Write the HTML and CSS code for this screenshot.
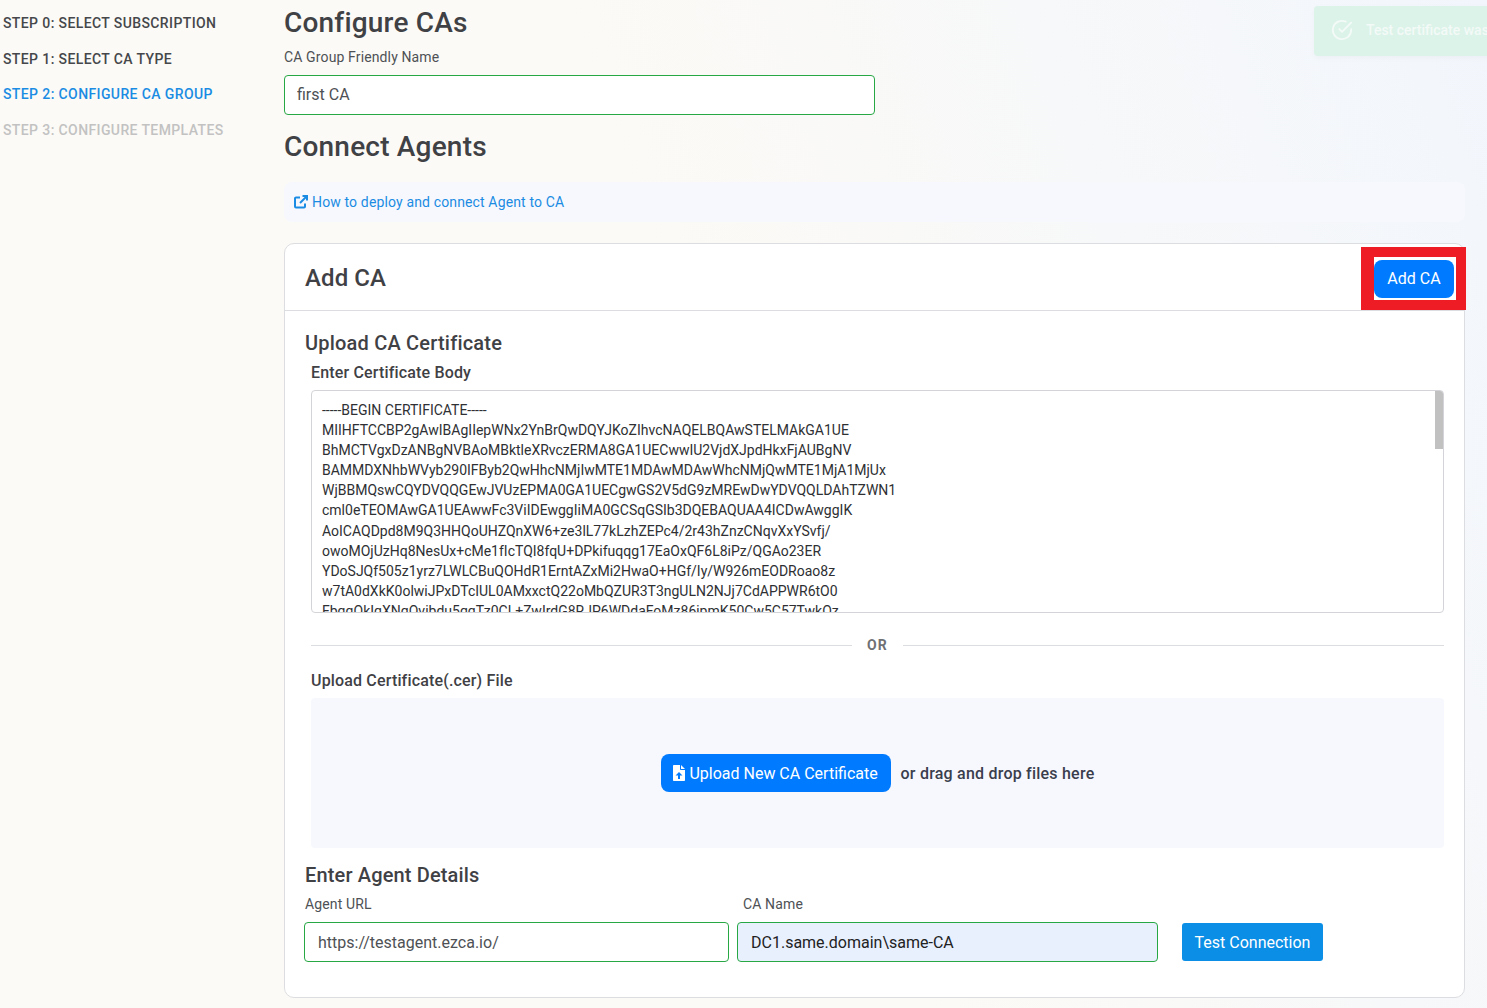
FILE: index.html
```html
<!DOCTYPE html>
<html>
<head>
    <title>Configure CAs</title>
    <link rel="stylesheet" href="styles.css">
</head>
<body>
    <div class="toast">
        <svg class="toast-icon" viewBox="0 0 24 24"><path d="M22 11.1V12a10 10 0 1 1-5.9-9.1"/><path d="M22 4 12 14l-3-3"/></svg>
        <span>Test certificate was created</span>
    </div>

    <div class="page">
        <div class="sidebar">
            <div class="step">Step 0: Select Subscription</div>
            <div class="step">Step 1: Select CA Type</div>
            <div class="step active">Step 2: Configure CA Group</div>
            <div class="step todo">Step 3: Configure Templates</div>
        </div>

        <div class="main">
            <h1>Configure CAs</h1>
            <label class="field-label">CA Group Friendly Name</label>
            <input type="text" class="text-input group-name" value="first CA">

            <h1 class="second-title">Connect Agents</h1>
            <div class="help-box">
                <a class="help-link">
                    <svg class="link-icon" viewBox="0 0 14 14"><path d="M11 8.500v3a1 1 0 0 1-1 1H2a1 1 0 0 1-1-1V3.500a1 1 0 0 1 1-1h4"/><path d="M8.500 1H13v4.500"/><path d="M13 1 6 8"/></svg>How to deploy and connect Agent to CA
                </a>
            </div>

            <div class="card">
                <div class="card-header">
                    <h2>Add CA</h2>
                    <div class="highlight">
                        <button class="btn-primary add-btn">Add CA</button>
                    </div>
                </div>

                <div class="card-body">
                    <h3>Upload CA Certificate</h3>
                    <div class="inset">
                        <div class="bold-label cert-label">Enter Certificate Body</div>
                        <div class="cert-wrap">
                            <textarea class="cert-body" readonly wrap="off">-----BEGIN CERTIFICATE-----
MIIHFTCCBP2gAwIBAgIIepWNx2YnBrQwDQYJKoZIhvcNAQELBQAwSTELMAkGA1UE
BhMCTVgxDzANBgNVBAoMBktleXRvczERMA8GA1UECwwIU2VjdXJpdHkxFjAUBgNV
BAMMDXNhbWVyb290IFByb2QwHhcNMjIwMTE1MDAwMDAwWhcNMjQwMTE1MjA1MjUx
WjBBMQswCQYDVQQGEwJVUzEPMA0GA1UECgwGS2V5dG9zMREwDwYDVQQLDAhTZWN1
cml0eTEOMAwGA1UEAwwFc3ViIDEwggIiMA0GCSqGSIb3DQEBAQUAA4ICDwAwggIK
AoICAQDpd8M9Q3HHQoUHZQnXW6+ze3lL77kLzhZEPc4/2r43hZnzCNqvXxYSvfj/
owoMOjUzHq8NesUx+cMe1fIcTQI8fqU+DPkifuqqg17EaOxQF6L8iPz/QGAo23ER
YDoSJQf505z1yrz7LWLCBuQOHdR1ErntAZxMi2HwaO+HGf/Iy/W926mEODRoao8z
w7tA0dXkK0olwiJPxDTcIUL0AMxxctQ22oMbQZUR3T3ngULN2NJj7CdAPPWR6tO0
FbqqOkIqXNqOvibdu5qqTz0CL+ZwIrdG8RJP6WDdaFoMz86jpmK50Cw5C57TwkOz</textarea>
                            <div class="scroll-thumb"></div>
                        </div>

                        <div class="divider"><span>OR</span></div>

                        <div class="bold-label">Upload Certificate(.cer) File</div>
                        <div class="dropzone">
                            <button class="btn-primary upload-btn">
                                <svg class="upload-icon" viewBox="0 0 12 16"><path d="M7 0v4.250c0 .4.350.750.750.750H12v10.250c0 .4-.350.750-.750.750H.750A.750.750 0 0 1 0 15.250V.750C0 .350.350 0 .750 0H7zm1 0 4 4H8V0zM6 7 2.500 10.500H5V14h2v-3.500h2.500L6 7z" fill-rule="evenodd"/></svg>Upload New CA Certificate
                            </button>
                            <span class="drop-text">or drag and drop files here</span>
                        </div>
                    </div>

                    <h3 class="agent-title">Enter Agent Details</h3>
                    <div class="agent-row">
                        <div class="agent-url">
                            <label class="field-label">Agent URL</label>
                            <input type="text" class="text-input url-input" value="https://testagent.ezca.io/">
                        </div>
                        <div class="agent-name">
                            <label class="field-label">CA Name</label>
                            <input type="text" class="text-input name-input" value="DC1.same.domain\same-CA">
                        </div>
                        <button class="test-btn">Test Connection</button>
                    </div>
                </div>
            </div>
        </div>
    </div>
</body>
</html>
```

FILE: styles.css
```css
html, body { height: 100%; }
body {
    margin: 0;
    overflow: hidden;
    font-family: Roboto, "Liberation Sans", sans-serif;
    color: #3f4145;
    background: linear-gradient(70deg, #fbfaf6 0%, #fcfaf6 50%, #f2f6fc 100%);
}
.page { display: flex; }

/* steps on the left */
.sidebar { width: 281px; padding: 6px 0 0 3px; flex-shrink: 0; }
.step {
    height: 35.700px;
    line-height: 35.700px;
    font-size: 14px;
    font-weight: 500;
    letter-spacing: 0.39px;
    text-transform: uppercase;
    color: #45474b;
}
.step.active { color: #1b8ce3; }
.step.todo { color: #c2c2c2; }

.main { width: 1181px; }
h1 {
    margin: 0;
    font-size: 28px;
    font-weight: 500;
    line-height: 34px;
    letter-spacing: 0.2px;
    padding-top: 6px;
}
.second-title { margin-top: 9px; }
.field-label { display: block; font-size: 14px; line-height: 18px; letter-spacing: 0.13px; color: #4e5155; }
.main > .field-label { margin-top: 8px; margin-bottom: 9px; }
.text-input {
    display: block;
    box-sizing: border-box;
    height: 40px;
    padding: 0 13px;
    font-family: inherit;
    font-size: 16px;
    color: #4e5155;
    background: #fff;
    border: 1px solid #28a745;
    border-radius: 4px;
    outline: none;
}
.group-name { width: 591px; padding: 0 12px 2px; }

.help-box {
    margin-top: 18px;
    height: 40px;
    display: flex;
    align-items: center;
    padding-left: 10px;
    background: #f7f8fd;
    border-radius: 8px;
}
.help-link { font-size: 14px; letter-spacing: 0.14px; color: #1b8ce3; display: flex; align-items: center; }
.link-icon { width: 14px; height: 14px; margin-right: 4px; fill: none; stroke: #1b8ce3; stroke-width: 2; }

.card {
    margin-top: 21px;
    box-sizing: border-box;
    background: #fff;
    border: 1px solid #dcdde0;
    border-radius: 10px;
    height: 755px;
}
.card-header {
    position: relative;
    height: 66px;
    display: flex;
    align-items: center;
    padding: 2px 0 0 20px;
    box-sizing: border-box;
    height: 67px;
    border-bottom: 1px solid #dcdde0;
}
h2 { margin: 0; font-size: 24px; font-weight: 500; letter-spacing: 0.1px; }
.highlight {
    position: absolute;
    right: -2px;
    top: 3px;
    box-sizing: border-box;
    width: 105px;
    height: 63px;
    border: 10px solid #ee1c25;
    border-left-width: 13px;
    display: flex;
    align-items: center;
    background: #fff;
}
.btn-primary {
    border: none;
    background: #007bff;
    color: #fff;
    font-family: inherit;
    font-size: 16px;
    border-radius: 8px;
    height: 38px;
    padding: 0;
}
.add-btn { width: 80px; }

.card-body { padding: 20px 20px 0 20px; }
h3 { margin: 0; font-size: 20px; font-weight: 500; line-height: 24px; letter-spacing: 0.2px; }
.inset { padding: 0 0 0 6px; }
.bold-label { font-size: 16px; font-weight: 500; line-height: 20px; letter-spacing: 0.16px; }
.cert-label { margin-top: 8px; margin-bottom: 7px; }
.cert-wrap { position: relative; }
.cert-body {
    display: block;
    box-sizing: border-box;
    width: 1133px;
    height: 223px;
    padding: 9px 10px 0;
    font-family: inherit;
    font-size: 14px;
    line-height: 20.100px;
    color: #2e3033;
    border: 1px solid #d3d4d7;
    border-radius: 4px;
    resize: none;
    outline: none;
    overflow: hidden;
    white-space: pre;
}
.scroll-thumb {
    position: absolute;
    right: 1px;
    top: 1px;
    width: 8px;
    height: 58px;
    background: #c1c1c1;
    border-top-right-radius: 3px;
}
.divider {
    display: flex;
    align-items: center;
    gap: 15px;
    margin-top: 24px;
    margin-bottom: 18px;
    font-size: 14px;
    line-height: 16px;
    font-weight: 700;
    letter-spacing: 1.2px;
    color: #6f7175;
}
.divider::before, .divider::after { content: ""; flex: 1; height: 1px; background: #dcdde0; }
.dropzone {
    margin-top: 7px;
    height: 150px;
    display: flex;
    align-items: center;
    justify-content: center;
    gap: 10px;
    background: #f7f8fe;
    border-radius: 4px;
}
.upload-btn { width: 230px; display: flex; align-items: center; justify-content: center; }
.upload-icon { width: 12px; height: 16px; margin-right: 4px; fill: #fff; }
.drop-text { font-size: 16px; font-weight: 500; letter-spacing: 0.22px; color: #3a3e4d; }

.agent-title { margin-top: 15px; letter-spacing: 0.15px; }
.agent-row { display: flex; align-items: flex-end; margin-top: 8px; margin-left: -1px; }
.agent-row .field-label { margin-bottom: 9px; margin-left: 1px; }
.agent-url { width: 425px; }
.agent-name { width: 421px; margin-left: 8px; }
.agent-name .field-label { margin-left: 6px; }
.url-input { width: 100%; }
.name-input { width: 100%; background: #e8f0fe; color: #222; }
.test-btn {
    margin-left: 24px;
    margin-bottom: 1px;
    width: 141px;
    height: 38px;
    border: none;
    border-radius: 3px;
    background: #0b8ee6;
    color: #fff;
    font-family: inherit;
    font-size: 16px;
}

/* toast fading out, runs past the window edge */
.toast {
    position: absolute;
    left: 1314px;
    top: 6px;
    width: 300px;
    height: 50px;
    display: flex;
    align-items: center;
    padding: 0 0 2px 17px;
    box-sizing: border-box;
    background: #dcf3e9;
    border-radius: 4px;
    box-shadow: 0 2px 6px rgba(0, 0, 0, 0.03);
    color: #f3faf7;
    font-size: 14px;
    font-weight: 500;
    white-space: nowrap;
}
.toast-icon { width: 22px; height: 22px; margin-right: 13px; fill: none; stroke: #f3faf7; stroke-width: 2; stroke-linecap: round; stroke-linejoin: round; }
```
